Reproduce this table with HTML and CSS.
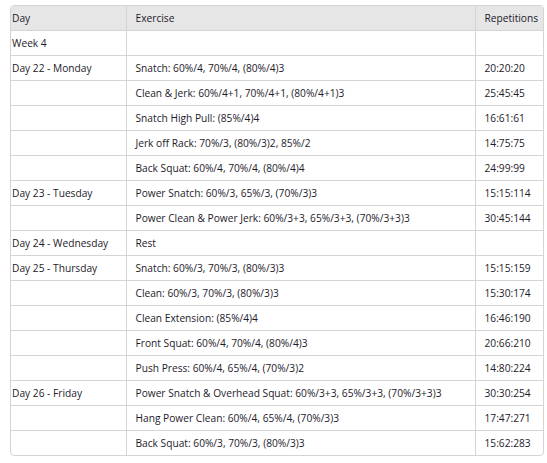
FILE: index.html
```html
<!DOCTYPE html>
<html>
<head>
<meta charset="utf-8">
<link rel="stylesheet" href="styles.css">
</head>
<body>
<div class="wrap">
<table class="plan">
<colgroup><col class="c-day"><col class="c-ex"><col class="c-rep"></colgroup>
<thead>
<tr><th class="day">Day</th><th>Exercise</th><th>Repetitions</th></tr>
</thead>
<tbody>
<tr><td class="day">Week 4</td><td></td><td></td></tr>
<tr><td class="day">Day 22 - Monday</td><td>Snatch: 60%/4, 70%/4, (80%/4)3</td><td>20:20:20</td></tr>
<tr><td class="day"></td><td>Clean &amp; Jerk: 60%/4+1, 70%/4+1, (80%/4+1)3</td><td>25:45:45</td></tr>
<tr><td class="day"></td><td>Snatch High Pull: (85%/4)4</td><td>16:61:61</td></tr>
<tr><td class="day"></td><td>Jerk off Rack: 70%/3, (80%/3)2, 85%/2</td><td>14:75:75</td></tr>
<tr><td class="day"></td><td>Back Squat: 60%/4, 70%/4, (80%/4)4</td><td>24:99:99</td></tr>
<tr><td class="day">Day 23 - Tuesday</td><td>Power Snatch: 60%/3, 65%/3, (70%/3)3</td><td>15:15:114</td></tr>
<tr><td class="day"></td><td>Power Clean &amp; Power Jerk: 60%/3+3, 65%/3+3, (70%/3+3)3</td><td>30:45:144</td></tr>
<tr><td class="day">Day 24 - Wednesday</td><td>Rest</td><td></td></tr>
<tr><td class="day">Day 25 - Thursday</td><td>Snatch: 60%/3, 70%/3, (80%/3)3</td><td>15:15:159</td></tr>
<tr><td class="day"></td><td>Clean: 60%/3, 70%/3, (80%/3)3</td><td>15:30:174</td></tr>
<tr><td class="day"></td><td>Clean Extension: (85%/4)4</td><td>16:46:190</td></tr>
<tr><td class="day"></td><td>Front Squat: 60%/4, 70%/4, (80%/4)3</td><td>20:66:210</td></tr>
<tr><td class="day"></td><td>Push Press: 60%/4, 65%/4, (70%/3)2</td><td>14:80:224</td></tr>
<tr><td class="day">Day 26 - Friday</td><td>Power Snatch &amp; Overhead Squat: 60%/3+3, 65%/3+3, (70%/3+3)3</td><td>30:30:254</td></tr>
<tr><td class="day"></td><td>Hang Power Clean: 60%/4, 65%/4, (70%/3)3</td><td>17:47:271</td></tr>
<tr><td class="day"></td><td>Back Squat: 60%/3, 70%/3, (80%/3)3</td><td>15:62:283</td></tr>
</tbody>
</table>
</div>
</body>
</html>
```
FILE: styles.css
```css
html, body {
  margin: 0;
  background: #ffffff;
}
body {
  padding: 5px 3px 0 10px;
  font-family: "Open Sans", "Noto Sans", sans-serif;
  font-size: 10.2px;
  color: #1e1a2a;
}
.wrap {
  width: 534px;
  box-sizing: border-box;
  border: 1px solid #d4d4d4;
  border-radius: 4px;
  overflow: hidden;
}
.plan {
  width: 100%;
  border-collapse: collapse;
  table-layout: fixed;
}
.c-day { width: 115px; }
.c-ex { width: 349px; }
.plan th, .plan td {
  height: 24px;
  padding: 0 9px;
  text-align: left;
  font-weight: normal;
  border-right: 1px solid #d4d4d4;
  border-bottom: 1px solid #d4d4d4;
  white-space: nowrap;
  vertical-align: middle;
}
.plan th:last-child, .plan td:last-child { border-right: none; }
.plan tbody tr:last-child td { border-bottom: none; }
.plan thead th { background: #e6e6e6; }
.plan .day { padding-left: 1px; }
```
